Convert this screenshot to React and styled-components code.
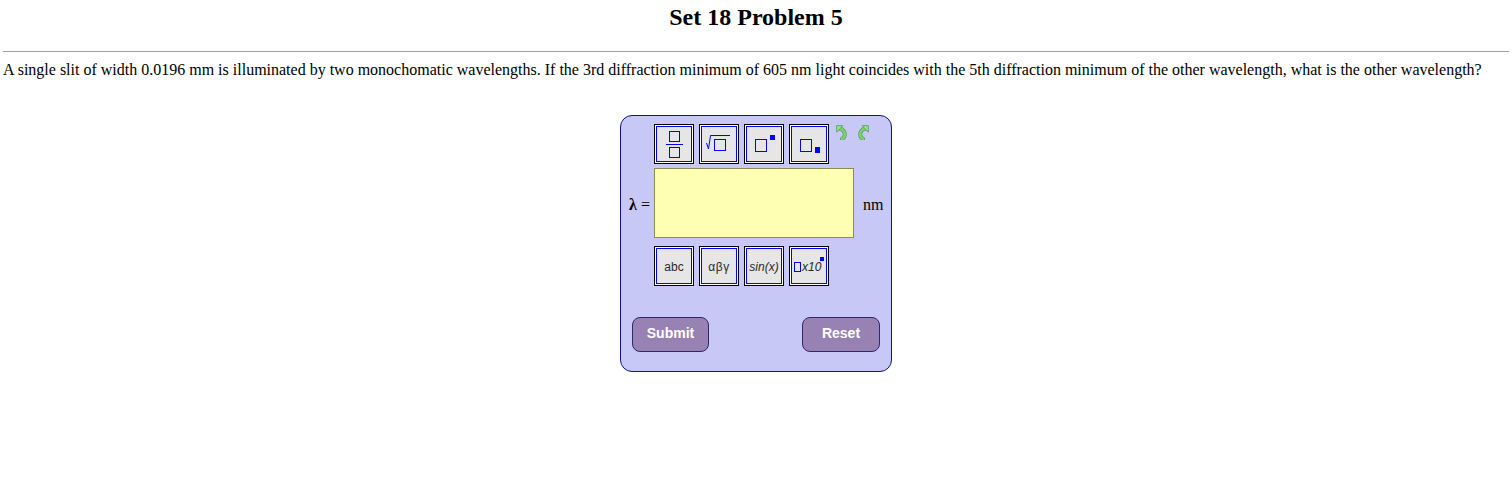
import React from "react";
import styled, { createGlobalStyle } from "styled-components";

const Global = createGlobalStyle`
  html, body { margin: 0; padding: 0; background: #fff; }
  body { font-family: "Liberation Serif", "Times New Roman", serif; font-size: 16px; color: #000; }
`;
const Page = styled.div`
  padding: 0 3px;
  height: 492px;
  box-sizing: border-box;
  overflow: hidden;
`;
const Title = styled.h2`
  margin: 0;
  padding-top: 4px;
  height: 51px;
  box-sizing: border-box;
  font-size: 24px;
  line-height: 27px;
  font-weight: bold;
  text-align: center;
`;
const Rule = styled.hr`
  margin: 0;
  height: 1px;
  border: 0;
  background: #a0a0a0;
`;
const Question = styled.p`
  margin: 9px 0 0;
  line-height: 18px;
  white-space: nowrap;
`;
const Panel = styled.div`
  box-sizing: border-box;
  width: 272px;
  height: 257px;
  margin: 36px auto 0;
  border: 1px solid #14148c;
  border-radius: 12px;
  background: #c8c8f6;
  padding: 8px 0 0 33px;
`;
const Row = styled.div`
  display: flex;
  align-items: flex-start;
`;
const Tools = styled.div`
  display: flex;
  gap: 5px;
`;
const Tool = styled.div`
  box-sizing: border-box;
  width: 40px;
  height: 40px;
  border: 1px solid #000;
  padding: 1px;
  background: #fff;
`;
const ToolFace = styled.div`
  box-sizing: border-box;
  width: 36px;
  height: 36px;
  border: 1px solid #0000ff;
  padding-top: ${(p) => p.$drop || 0}px;
  background: #e6e6e6;
  display: flex;
  align-items: center;
  justify-content: center;
  font-family: "Liberation Sans", Arial, sans-serif;
  font-size: 12px;
  letter-spacing: ${(p) => p.$track || 0}px;
  font-style: ${(p) => (p.$italic ? "italic" : "normal")};
  color: #2a2a2a;
  white-space: nowrap;
`;
const History = styled.div`
  display: flex;
  gap: 11px;
  margin: 1px 0 0 7px;
`;
const EntryRow = styled.div`
  display: flex;
  align-items: center;
  margin-top: 4px;
  margin-left: -33px;
`;
const Symbol = styled.div`
  width: 33px;
  padding-right: 4px;
  box-sizing: border-box;
  text-align: right;
  font-size: 16px;
  line-height: 18px;
  white-space: nowrap;
  position: relative;
  top: 2px;
`;
const Field = styled.div`
  box-sizing: border-box;
  width: 200px;
  height: 70px;
  background: #ffffb4;
  border: 1px solid #8c8c5a;
`;
const Unit = styled.div`
  margin-left: 9px;
  font-size: 16px;
  position: relative;
  top: 2px;
`;
const LowerTools = styled(Tools)`
  margin-top: 8px;
`;
const Actions = styled.div`
  display: flex;
  justify-content: space-between;
  margin: 31px 0 0 -22px;
  width: 248px;
`;
const ActionButton = styled.button`
  box-sizing: border-box;
  width: ${(p) => p.$w}px;
  height: 35px;
  padding: 0 0 3px;
  border: 1px solid #34246a;
  border-radius: 8px;
  background: #9882b4;
  color: #fff;
  font: bold 14px "Liberation Sans", Arial, sans-serif;
`;

const Box = ({ x, y, w, h }) => <rect x={x + 0.5} y={y + 0.5} width={w} height={h} fill="none" stroke="#0000ff" />;
const Glyph = ({ children }) => <svg width="34" height="34" viewBox="0 0 34 34">{children}</svg>;
const Blue = ({ x, y, w, h }) => <rect x={x} y={y} width={w} height={h} fill="#0000ff" />;

const TAIL = "M3 3.5 C7.5 4 9.5 7.5 8.5 11 C8 12.5 7 13.4 6 13.8";
const Undo = ({ flip }) => (
  <svg width="11" height="15" viewBox="0 0 11 15" style={flip ? { transform: "scaleX(-1)" } : undefined}>
    <path d={TAIL} fill="none" stroke="#4f9e58" strokeWidth="4" strokeLinecap="round" />
    <path d={TAIL} fill="none" stroke="#7fcf74" strokeWidth="2.6" strokeLinecap="round" />
    <path d="M0.7 0.7 H6.8 L0.7 7.2 Z" fill="#9ee094" stroke="#5aa862" strokeWidth="1" strokeLinejoin="round" />
  </svg>
);

export default function App() {
  return (
    <Page>
      <Global />
      <Title>Set 18 Problem 5</Title>
      <Rule />
      <Question>
        A single slit of width 0.0196 mm is illuminated by two monochomatic wavelengths. If the 3rd diffraction minimum of 605 nm light coincides with the 5th diffraction minimum of the other wavelength, what is the other wavelength?
      </Question>
      <Panel>
        <Row>
          <Tools>
            <Tool>
              <ToolFace>
                <Glyph>
                  <Box x={12} y={4} w={10} h={10} />
                  <rect x={9} y={17} width={17} height={1} fill="#0000ff" />
                  <Box x={12} y={20} w={10} h={10} />
                </Glyph>
              </ToolFace>
            </Tool>
            <Tool>
              <ToolFace>
                <Glyph>
                  <path d="M4.5 16 L6.5 22 L8.5 8.5 H28" fill="none" stroke="#0000ff" strokeWidth="1" />
                  <Box x={12} y={12} w={11} h={11} />
                </Glyph>
              </ToolFace>
            </Tool>
            <Tool>
              <ToolFace>
                <Glyph>
                  <Box x={8} y={12} w={11} h={12} />
                  <Blue x={23} y={8} w={5} h={5} />
                </Glyph>
              </ToolFace>
            </Tool>
            <Tool>
              <ToolFace>
                <Glyph>
                  <Box x={8} y={12} w={11} h={12} />
                  <Blue x={23} y={20} w={5} h={6} />
                </Glyph>
              </ToolFace>
            </Tool>
          </Tools>
          <History>
            <Undo />
            <Undo flip />
          </History>
        </Row>
        <EntryRow>
          <Symbol><b>λ</b> =</Symbol>
          <Field />
          <Unit>nm</Unit>
        </EntryRow>
        <LowerTools>
          <Tool><ToolFace $drop={1}>abc</ToolFace></Tool>
          <Tool><ToolFace $drop={1} $track={0.5}>αβγ</ToolFace></Tool>
          <Tool><ToolFace $drop={1} $italic>sin(x)</ToolFace></Tool>
          <Tool>
            <ToolFace $italic>
              <Glyph>
                <Box x={2} y={13} w={6} h={9} />
                <text x={10} y={22} fontSize="12" fontStyle="italic" fontFamily="Liberation Sans, Arial, sans-serif" fill="#2a2a2a">x10</text>
                <Blue x={28} y={8} w={4} h={4} />
              </Glyph>
            </ToolFace>
          </Tool>
        </LowerTools>
        <Actions>
          <ActionButton $w={77}>Submit</ActionButton>
          <ActionButton $w={78}>Reset</ActionButton>
        </Actions>
      </Panel>
    </Page>
  );
}
